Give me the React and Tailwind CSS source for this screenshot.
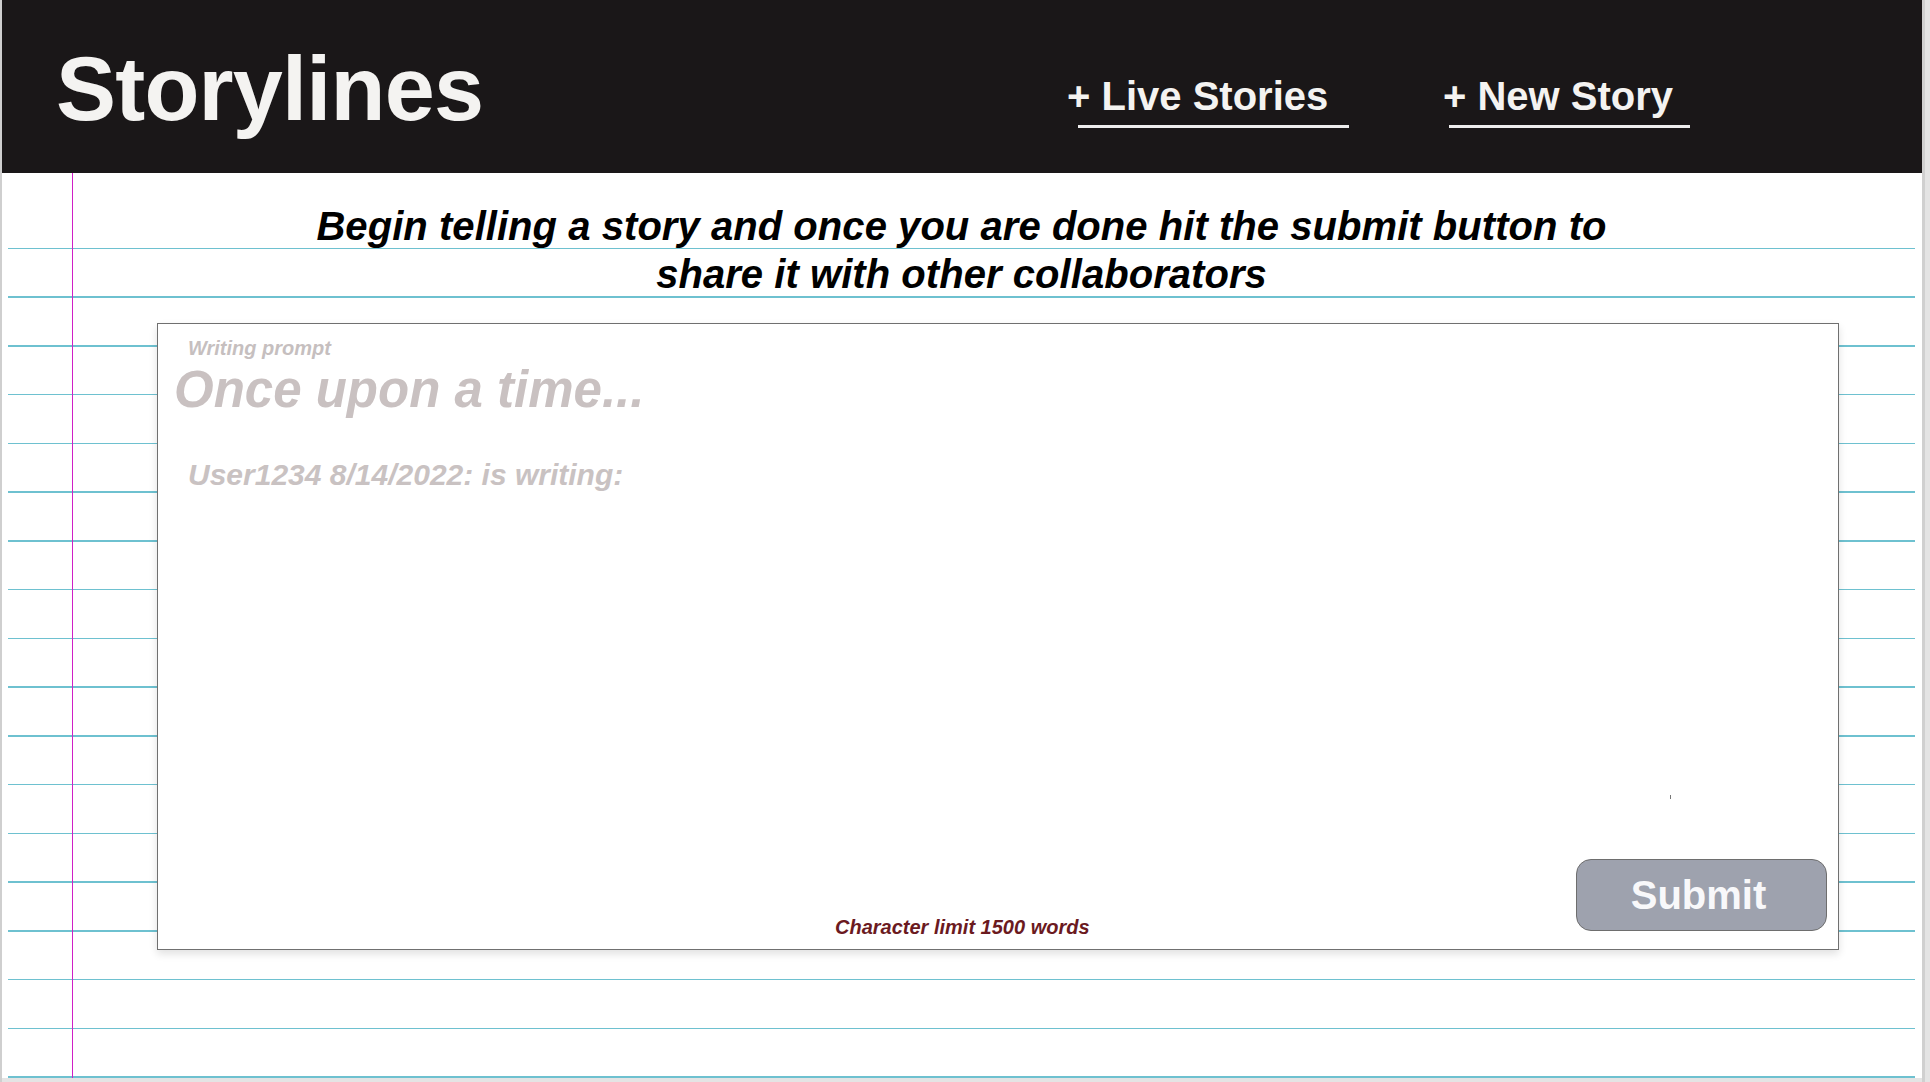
import React from 'react'

const NAV = [
    { label: '+ Live Stories', line: 'ml-[11px] w-[271px]' },
    { label: '+ New Story', line: 'ml-[6px] w-[241px]' }
]

export default function App() {
    return (
        <div className="w-[1930px] h-[1082px] bg-[#e4e4e4] flex overflow-hidden font-['Liberation_Sans',Arial,sans-serif]">
            <div className="w-[2px] h-full bg-[#cfcfcf]" />

            <div className="w-[1920px] h-[1078px] bg-white flex flex-col">
                {/* Header */}
                <header className="h-[173px] shrink-0 bg-[#1a1718] flex items-start text-[#f4f3f1]">
                    <h1 className="ml-[54px] pt-[44px] text-[90px] leading-[90px] font-bold tracking-[-0.8px]">
                        Storylines
                    </h1>
                    <nav className="ml-auto mr-[232px] pt-[72px] flex gap-[94px]">
                        {NAV.map(item => (
                            <a key={item.label} href="#" className="flex flex-col">
                                <span className="text-[40px] leading-[48px] font-bold whitespace-nowrap">{item.label}</span>
                                <span className={`mt-[5px] h-[3px] bg-[#ededed] ${item.line}`} />
                            </a>
                        ))}
                    </nav>
                </header>

                {/* Lined paper */}
                <main className="flex-1 ml-[6px] w-[1907px] bg-[image:linear-gradient(to_right,transparent_64px,#cf1fc6_64px,#cf1fc6_65.5px,transparent_65.5px),linear-gradient(to_bottom,#ffffff_50px,transparent_50px),repeating-linear-gradient(to_bottom,transparent_0px,transparent_25.8px,#6ec1d0_25.8px,#6ec1d0_27.3px,transparent_27.3px,transparent_48.76px)]">
                    <h2 className="pt-[29px] text-center text-[40px] leading-[48px] font-bold italic text-black tracking-[0.05px]">
                        Begin telling a story and once you are done hit the submit button to
                        <br />
                        share it with other collaborators
                    </h2>

                    <section className="relative mt-[25px] ml-[149px] w-[1682px] h-[627px] border border-[#707070] bg-white shadow-[0_4px_8px_rgba(0,0,0,0.12)] flex flex-col">
                        <p className="pl-[30px] pt-[12px] text-[20px] leading-[24px] font-bold italic text-[#c6bfbf]">Writing prompt</p>
                        <p className="pl-[16px] text-[51px] leading-[60px] font-bold italic text-[#c9c1c1]">Once upon a time...</p>
                        <p className="mt-[37px] pl-[30px] text-[30px] leading-[36px] font-bold italic text-[#c9c2c2]">User1234 8/14/2022: is writing:</p>

                        <span className="absolute left-[1512px] top-[471px] w-px h-[4px] bg-[#777777]" />

                        <div className="mt-auto flex items-end">
                            <p className="ml-[677px] mb-[10px] text-[20px] leading-[24px] font-bold italic text-[#6b1a1f]">
                                Character limit 1500 words
                            </p>
                            <button className="ml-auto mr-[11px] mb-[18px] w-[251px] h-[72px] pr-[6px] rounded-[15px] border border-[#6e6e6e] bg-[#9ea2ae] text-[40px] leading-none font-bold text-[#f8f8fa] flex items-center justify-center">
                                Submit
                            </button>
                        </div>
                    </section>
                </main>
            </div>

            <div className="w-[3px] h-full bg-[#d0d0d0]" />
        </div>
    )
}
